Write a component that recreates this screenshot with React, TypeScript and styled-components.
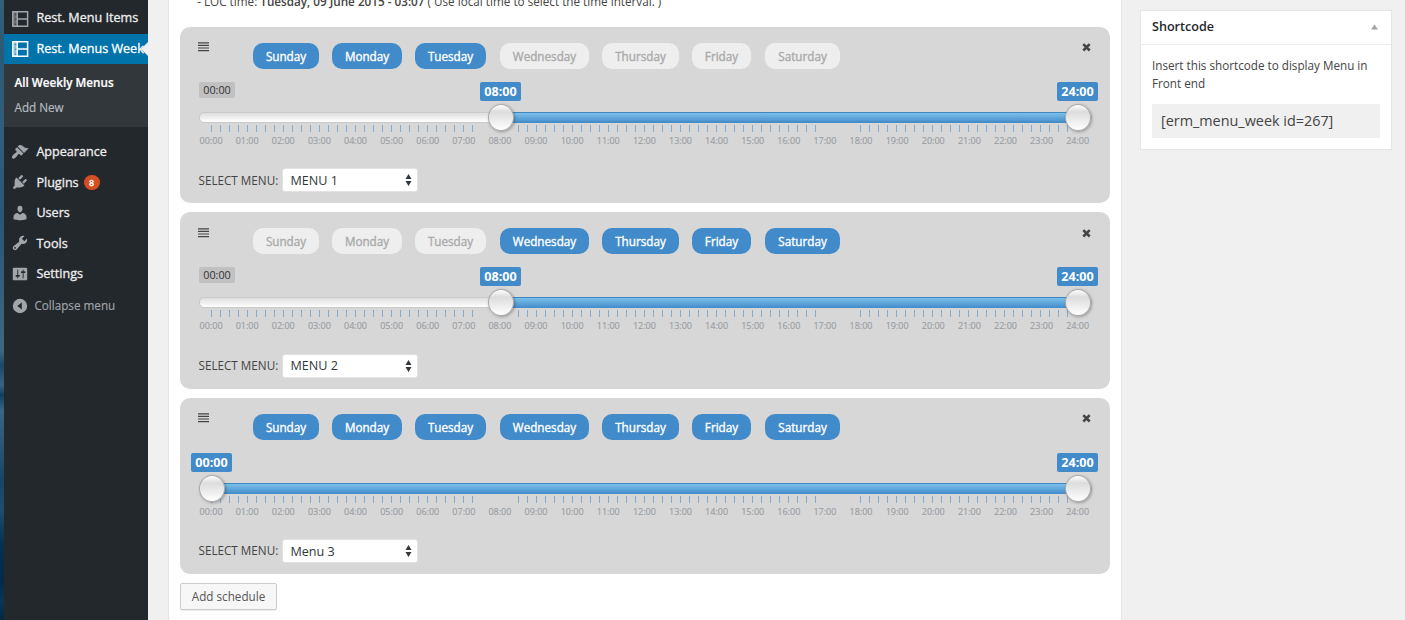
import React from "react";
import styled, { createGlobalStyle } from "styled-components";

const GlobalStyle = createGlobalStyle`
  * { box-sizing: border-box; }
  html, body { margin: 0; padding: 0; overflow: hidden; }
  body { background: #f0f0f0; font-family: "Open Sans", sans-serif; color: #444; font-size: 11.7px; }
  button, select { font-family: inherit; }
`;

const Page = styled.div`
  display: flex;
  width: 1405px;
  height: 620px;
  overflow: hidden;
`;

const Wallpaper = styled.div`
  flex: none;
  width: 4px;
  background: linear-gradient(#35607a 0, #2b5873 60px, #335f7b 130px, #2a5674 220px, #416780 350px,
    #1d4865 365px, #3a6280 385px, #123e5e 395px, #3a6583 410px, #2a5472 450px, #184565 480px,
    #1f4d6d 510px, #06304f 545px, #02294a 580px, #0b3654 600px, #032742 620px);
`;

const Sidebar = styled.nav`
  flex: none;
  width: 144px;
  height: 620px;
  background: #23282d;
  padding-top: 3px;
`;

const MenuRow = styled.a<{ $active?: boolean; $h: number }>`
  position: relative;
  display: flex;
  align-items: center;
  height: ${(p) => p.$h}px;
  padding-left: 7px;
  color: ${(p) => (p.$active ? "#fff" : "#eee")};
  background: ${(p) => (p.$active ? "#0073aa" : "transparent")};
  font-size: 12.6px;
  line-height: 17px;
  white-space: nowrap;
  -webkit-text-stroke: 0.3px currentColor;
  svg { flex: none; width: 18px; height: 18px; margin-right: 7.4px; color: ${(p) => (p.$active ? "#fff" : "#a0a5aa")}; }
`;

const Raised = styled.span`
  margin-bottom: 2px;
`;

const Pointer = styled.i`
  position: absolute;
  right: 0;
  top: 7.5px;
  border: 7.5px solid transparent;
  border-left: 0;
  border-right-color: #f0f0f0;
`;

const Submenu = styled.div`
  height: 63px;
  margin-bottom: 9px;
  padding: 6px 0 0 10.5px;
  background: #32373c;
`;

const SubItem = styled.a<{ $current?: boolean }>`
  display: block;
  height: 25px;
  line-height: 25px;
  font-size: 11.7px;
  font-weight: ${(p) => (p.$current ? 600 : 400)};
  color: ${(p) => (p.$current ? "#fff" : "#b4b9be")};
  -webkit-text-stroke: 0.2px currentColor;
`;

const Count = styled.span`
  margin-left: 5px;
  width: 16px;
  height: 15px;
  border-radius: 8px;
  background: #d54e21;
  color: #fff;
  font-size: 9px;
  font-weight: 600;
  line-height: 15px;
  text-align: center;
`;

const Collapse = styled(MenuRow)`
  margin-top: 1px;
  color: #a0a5aa;
  font-size: 11.7px;
  -webkit-text-stroke: 0.15px currentColor;
  svg { margin-right: 5.4px; }
`;

const Main = styled.main`
  flex: none;
  width: 954px;
  height: 640px;
  margin-left: 20px;
  padding: 0 11px;
  background: #fff;
  border: 1px solid #e5e5e5;
  border-width: 0 1px;
`;

const Info = styled.p`
  margin: -7px 0 0;
  height: 34px;
  padding-left: 17.2px;
  line-height: 16px;
  font-size: 11.71px;
  b { font-weight: 600; }
`;

const Card = styled.section`
  height: 176.3px;
  margin-bottom: 9.1px;
  border-radius: 10px;
  background: #d7d7d7;
`;

const CardHead = styled.header`
  display: flex;
  height: 52px;
  padding: 16px 19px 0 18px;
`;

const Handle = styled.span`
  width: 55px;
  svg { display: block; margin-top: -0.8px; }
`;

const Close = styled.span`
  margin-left: auto;
  padding-top: 0.2px;
  svg { display: block; }
`;

const Day = styled.button<{ $on: boolean; $w: number; $gap: number }>`
  flex: none;
  width: ${(p) => p.$w}px;
  height: 26px;
  margin-right: ${(p) => p.$gap}px;
  padding: 0;
  border: 0;
  border-radius: 10px;
  background: ${(p) => (p.$on ? "#428bca" : "#eee")};
  color: ${(p) => (p.$on ? "#fff" : "#aaa")};
  font-size: 11.7px;
  line-height: 26px;
  -webkit-text-stroke: 0.35px currentColor;
`;

const Slider = styled.div`
  position: relative;
  height: 70px;
  margin: 0 18px;
`;

const Bubble = styled.span`
  position: absolute;
  top: 3px;
  width: 41px;
  height: 19px;
  margin-left: -20.5px;
  border-radius: 2px;
  background: #428bca;
  color: #fff;
  font-size: 12.6px;
  font-weight: 700;
  line-height: 19px;
  text-align: center;
`;

const MinLabel = styled.span`
  position: absolute;
  left: 1px;
  top: 3px;
  width: 36px;
  height: 16px;
  border-radius: 2px;
  background: #c1c1c1;
  color: #333;
  font-size: 10.8px;
  line-height: 16px;
  text-align: center;
`;

const Track = styled.div`
  position: absolute;
  left: 1px;
  top: 33px;
  width: 893px;
  height: 11px;
  border: 1px solid #c9c9c9;
  border-radius: 5px;
  background: linear-gradient(#dedede, #fff);
`;

const Range = styled.div`
  position: absolute;
  top: 33px;
  height: 11px;
  border-top: 1px solid #3f86c0;
  background: linear-gradient(#7cc0ea, #428bca);
`;

const Knob = styled.span`
  position: absolute;
  top: 25px;
  width: 26.5px;
  height: 27px;
  margin-left: -12.8px;
  border: 1px solid #aaa;
  border-radius: 50%;
  background: linear-gradient(#fff 0, #dcdcdc 28%, #fff 100%);
  box-shadow: 1px 1px 3px rgba(0, 0, 0, 0.3);
`;

const Ticks = styled.div`
  display: flex;
  padding: 46px 0 0 13px;
`;

const Tick = styled.i<{ $hidden: boolean }>`
  flex: none;
  width: 9.03px;
  height: 7px;
  border-left: 1px solid ${(p) => (p.$hidden ? "transparent" : "#83abd0")};
`;

const Hours = styled.div`
  display: flex;
  margin: 2px 0 0 -5px;
  font-size: 9px;
  line-height: 13px;
  color: #999ea3;
  -webkit-text-stroke: 0.15px currentColor;
  span { flex: none; width: 36.12px; text-align: center; }
`;

const SelectRow = styled.label`
  display: flex;
  align-items: center;
  height: 24px;
  margin: 19.3px 0 0 18.5px;
  font-size: 11.7px;
`;

const SelectLabel = styled.span`
  margin-bottom: 1.5px;
`;

const SelectBox = styled.span`
  display: flex;
  align-items: center;
  justify-content: space-between;
  width: 136px;
  height: 24px;
  margin-left: 4.2px;
  padding: 0 5px 0 7px;
  border: 1px solid #e2e2e2;
  border-radius: 3px;
  background: #fff;
  color: #32373c;
  font-size: 12.6px;
`;

const AddButton = styled.button`
  display: block;
  width: 97px;
  height: 27px;
  border: 1px solid #ccc;
  border-radius: 2px;
  background: #f7f7f7;
  box-shadow: 0 1px 0 rgba(0, 0, 0, 0.08);
  color: #555;
  font-size: 11.7px;
  padding: 0 0 1px;
`;

const Panel = styled.aside`
  flex: none;
  width: 252px;
  height: 140px;
  margin: 10px 0 0 18px;
  border: 1px solid #e5e5e5;
  background: #fff;
`;

const PanelHead = styled.header`
  display: flex;
  align-items: center;
  justify-content: space-between;
  height: 34px;
  padding: 0 13px 2px 11px;
  border-bottom: 1px solid #eee;
  color: #23282d;
  font-size: 12.6px;
  font-weight: 600;
`;

const PanelBody = styled.div`
  padding: 11px 11px 0;
  line-height: 18px;
`;

const Code = styled.div`
  height: 34px;
  margin-top: 12px;
  padding-left: 9px;
  background: #f0f0f0;
  font-size: 14.4px;
  line-height: 34px;
`;

const Dash = ({ d }: { d: string }) => (
  <svg viewBox="0 0 20 20" fill="currentColor">
    <path d={d} />
  </svg>
);

const MenuCardIcon = () => (
  <svg viewBox="0 0 18 18">
    <path d="M1.8 1.8H16.6V16.2H1.8ZM6.2 1.8V16.2M6.2 9H16.6" fill="none" stroke="currentColor" strokeWidth="1.5" />
    <path d="M1.8 1.8h4.4v1.9h-2v1h2v4h-2v1h2v4h-2v1h2v1.5H1.8z" fill="currentColor" fillOpacity="0.55" />
  </svg>
);

const icons = {
  appearance:
    "M14.48 11.06L7.41 3.99l1.5-1.5c.5-.56 2.3-.47 3.51.32 1.21.8 1.43 1.28 2.91 2.1 1.18.64 2.45 1.26 4.45.85zm-.71.71L6.7 4.7 4.93 6.47c-.39.39-.39 1.02 0 1.41l1.06 1.06c.39.39.39 1.03 0 1.42-.6.6-1.43 1.11-2.21 1.69-.35.26-.7.53-1.01.84C1.43 14.23.4 16.08 1.4 17.07c.99 1 2.84-.03 4.18-1.36.31-.31.58-.66.85-1.02.57-.78 1.08-1.61 1.69-2.21.39-.39 1.02-.39 1.41 0l1.06 1.06c.39.39 1.02.39 1.41 0z",
  plugins:
    "M13.11 4.36L9.87 7.6 8 5.73l3.24-3.24c.35-.34 1.05-.2 1.56.32.52.51.66 1.21.31 1.55zm-8 1.77l.91-1.12 9.01 9.01-1.19.84c-.71.71-2.63 1.16-3.82 1.16H6.14L4.9 17.26c-.59.59-1.54.59-2.12 0-.59-.58-.59-1.53 0-2.12l1.24-1.24v-3.88c0-1.13.4-3.19 1.09-3.89zm7.26 3.97l3.24-3.24c.34-.35 1.04-.21 1.55.31.52.51.66 1.21.31 1.55l-3.24 3.25z",
  users:
    "M10 9.25c-2.27 0-2.73-3.44-2.73-3.44C7 4.02 7.82 2 9.97 2c2.16 0 2.98 2.02 2.71 3.81 0 0-.41 3.44-2.68 3.44zm0 2.57L12.72 10c2.39 0 4.52 2.33 4.52 4.53v2.49s-3.65 1.13-7.24 1.13c-3.65 0-7.24-1.13-7.24-1.13v-2.49c0-2.25 1.94-4.48 4.47-4.48z",
  tools:
    "M16.68 9.77c-1.34 1.34-3.3 1.67-4.95.99l-5.41 6.52c-.99.99-2.59.99-3.58 0s-.99-2.59 0-3.57l6.52-5.42c-.68-1.65-.35-3.61.99-4.95 1.28-1.28 3.12-1.62 4.72-1.06l-2.89 2.89 2.82 2.82 2.86-2.87c.53 1.58.18 3.39-1.08 4.65zM3.81 16.21c.4.39 1.04.39 1.43 0 .4-.4.4-1.04 0-1.43-.39-.4-1.03-.4-1.43 0-.39.39-.39 1.03 0 1.43z",
  settings:
    "M18 16V4c0-.55-.45-1-1-1H3c-.55 0-1 .45-1 1v12c0 .55.45 1 1 1h14c.55 0 1-.45 1-1zM8 11h1c.55 0 1 .45 1 1s-.45 1-1 1H8v1.5c0 .28-.22.5-.5.5s-.5-.22-.5-.5V13H6c-.55 0-1-.45-1-1s.45-1 1-1h1V5.5c0-.28.22-.5.5-.5s.5.22.5.5V11zm5-2h-1c-.55 0-1-.45-1-1s.45-1 1-1h1V5.5c0-.28.22-.5.5-.5s.5.22.5.5V7h1c.55 0 1 .45 1 1s-.45 1-1 1h-1v5.5c0 .28-.22.5-.5.5s-.5-.22-.5-.5V9z",
  collapse: "M10 2a8 8 0 1 0 0 16a8 8 0 1 0 0-16zM12 6v8L7 10z",
};

const days = [
  { name: "Sunday", w: 66, gap: 13 },
  { name: "Monday", w: 70, gap: 13 },
  { name: "Tuesday", w: 71, gap: 14 },
  { name: "Wednesday", w: 89, gap: 13 },
  { name: "Thursday", w: 77, gap: 13 },
  { name: "Friday", w: 59, gap: 14 },
  { name: "Saturday", w: 75, gap: 0 },
];

const clock = (h: number) => `${String(h).padStart(2, "0")}:00`;
const hourX = (h: number) => 13.5 + Math.round(h * 36.1);
const ticks = Array.from({ length: 96 }, (_, i) => i);
const hours = Array.from({ length: 25 }, (_, i) => i);

const isHiddenTick = (i: number) => (i >= 30 && i <= 33) || (i >= 68 && i <= 71);

function Schedule({ from, active, menu }: { from: number; active: number[]; menu: string }) {
  return (
    <Card>
      <CardHead>
        <Handle>
          <svg width="11" height="10" viewBox="0 0 11 10">
            <path d="M0 .8H11M0 3.4H11M0 6H11M0 8.6H11" stroke="#444" strokeWidth="1.15" />
          </svg>
        </Handle>
        {days.map((d, i) => (
          <Day key={d.name} $on={active.includes(i)} $w={d.w} $gap={d.gap}>
            {d.name}
          </Day>
        ))}
        <Close>
          <svg width="9" height="9" viewBox="0 0 9 9">
            <path d="M1.3 1.1L7.7 7.5M7.7 1.1L1.3 7.5" stroke="#444" strokeWidth="2.6" />
          </svg>
        </Close>
      </CardHead>
      <Slider>
        <Ticks>
          {ticks.map((i) => (
            <Tick key={i} $hidden={isHiddenTick(i)} />
          ))}
        </Ticks>
        <Hours>
          {hours.map((h) => (
            <span key={h}>{clock(h)}</span>
          ))}
        </Hours>
        <Track />
        <Range style={{ left: hourX(from), width: hourX(24) - hourX(from) }} />
        {from > 0 && <MinLabel>00:00</MinLabel>}
        <Bubble style={{ left: hourX(from) }}>{clock(from)}</Bubble>
        <Bubble style={{ left: hourX(24) }}>24:00</Bubble>
        <Knob style={{ left: hourX(from) }} />
        <Knob style={{ left: hourX(24) }} />
      </Slider>
      <SelectRow>
        <SelectLabel>SELECT MENU:</SelectLabel>
        <SelectBox>
          {menu}
          <svg width="7" height="12" viewBox="0 0 7 12">
            <path d="M3.5 0L6.5 5H.5ZM3.5 12L.5 7H6.5Z" fill="#32373c" />
          </svg>
        </SelectBox>
      </SelectRow>
    </Card>
  );
}

export default function App() {
  return (
    <Page>
      <GlobalStyle />
      <Wallpaper />
      <Sidebar>
        <MenuRow $h={31}><MenuCardIcon /><Raised>Rest. Menu Items</Raised></MenuRow>
        <MenuRow $active $h={30}><MenuCardIcon /><Raised>Rest. Menus Week</Raised><Pointer /></MenuRow>
        <Submenu>
          <SubItem $current>All Weekly Menus</SubItem>
          <SubItem>Add New</SubItem>
        </Submenu>
        <MenuRow $h={31}><Dash d={icons.appearance} />Appearance</MenuRow>
        <MenuRow $h={30}><Dash d={icons.plugins} />Plugins<Count>8</Count></MenuRow>
        <MenuRow $h={31}><Dash d={icons.users} />Users</MenuRow>
        <MenuRow $h={30}><Dash d={icons.tools} />Tools</MenuRow>
        <MenuRow $h={31}><Dash d={icons.settings} />Settings</MenuRow>
        <Collapse $h={31}><Dash d={icons.collapse} />Collapse menu</Collapse>
      </Sidebar>
      <Main>
        <Info>
          - LOC time: <b>Tuesday, 09 June 2015 - 03:07</b> ( Use local time to select the time interval. )
        </Info>
        <Schedule from={8} active={[0, 1, 2]} menu="MENU 1" />
        <Schedule from={8} active={[3, 4, 5, 6]} menu="MENU 2" />
        <Schedule from={0} active={[0, 1, 2, 3, 4, 5, 6]} menu="Menu 3" />
        <AddButton>Add schedule</AddButton>
      </Main>
      <Panel>
        <PanelHead>
          Shortcode
          <svg width="7" height="6" viewBox="0 0 7 6"><path d="M3.5 .5L7 5.5H0Z" fill="#a0a5aa" /></svg>
        </PanelHead>
        <PanelBody>
          Insert this shortcode to display Menu in Front end
          <Code>[erm_menu_week id=267]</Code>
        </PanelBody>
      </Panel>
    </Page>
  );
}
